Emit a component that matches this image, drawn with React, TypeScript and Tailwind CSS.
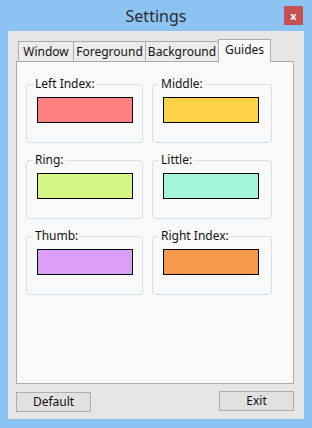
const guides = [
    { label: "Left Index:", color: "bg-[#ff8080]" },
    { label: "Middle:", color: "bg-[#fcd247]" },
    { label: "Ring:", color: "bg-[#d5f786]" },
    { label: "Little:", color: "bg-[#a4f6d8]" },
    { label: "Thumb:", color: "bg-[#d89ef8]" },
    { label: "Right Index:", color: "bg-[#f7994d]" },
];

const tabs = [
    { title: "Window", width: "w-[56px]" },
    { title: "Foreground", width: "w-[73px]" },
    { title: "Background", width: "w-[74px]" },
];

export default function App() {
    return (
        <div
            className="flex h-[428px] w-[312px] flex-col bg-[#8bc3f3] text-[12px] text-[#111]"
            style={{ fontFamily: '"Segoe UI", "Noto Sans", sans-serif' }}
        >
            {/* title bar */}
            <div className="grid h-[31px] grid-cols-[1fr_auto_1fr] items-center">
                <div />
                <h1 className="text-[16px] leading-none text-[#2b2b2b]">Settings</h1>
                <div className="flex justify-end pr-[9px]">
                    <button className="mb-[1px] flex h-[19px] w-[19px] items-center justify-center bg-[#c75050] text-[11px] font-bold leading-none text-white">
                        x
                    </button>
                </div>
            </div>

            {/* client area */}
            <div className="mx-[8px] flex h-[388px] flex-col bg-[#e6e6e6] pl-[8px] pr-[10px] pt-[8px]">
                <div className="flex h-[22px] items-end pl-[2px]">
                    {tabs.map((tab) => (
                        <div
                            key={tab.title}
                            className={`${tab.width} -mr-px flex h-[20px] items-center justify-center border border-b-0 border-[#acacac] bg-[#ececec] leading-none`}
                        >
                            {tab.title}
                        </div>
                    ))}
                    <div className="relative z-10 -mb-px flex h-[23px] w-[53px] items-center justify-center border border-b-0 border-[#acacac] bg-[#f9f9f9] pb-[2px] leading-none">
                        Guides
                    </div>
                </div>

                <div className="h-[323px] w-[278px] border border-[#acacac] bg-[#f9f9f9] pl-[9px] pt-[14px]">
                    <div className="grid grid-cols-[117px_120px] gap-x-[9px] gap-y-[9px]">
                        {guides.map((guide) => (
                            <fieldset
                                key={guide.label}
                                className="h-[67px] rounded-[3px] border border-[#d7e0e6]"
                            >
                                <legend className="ml-[6px] px-[2px] leading-[16px]">
                                    {guide.label}
                                </legend>
                                <div
                                    className={`ml-[10px] mt-[5px] h-[26px] w-[96px] border border-black ${guide.color}`}
                                />
                            </fieldset>
                        ))}
                    </div>
                </div>

                <div className="flex justify-between pt-[7px]">
                    <button className="mt-[1px] h-[20px] w-[75px] border border-[#adadad] bg-[#e1e1e1] leading-none">
                        Default
                    </button>
                    <button className="h-[20px] w-[75px] border border-[#adadad] bg-[#e1e1e1] leading-none">
                        Exit
                    </button>
                </div>
            </div>
        </div>
    );
}
